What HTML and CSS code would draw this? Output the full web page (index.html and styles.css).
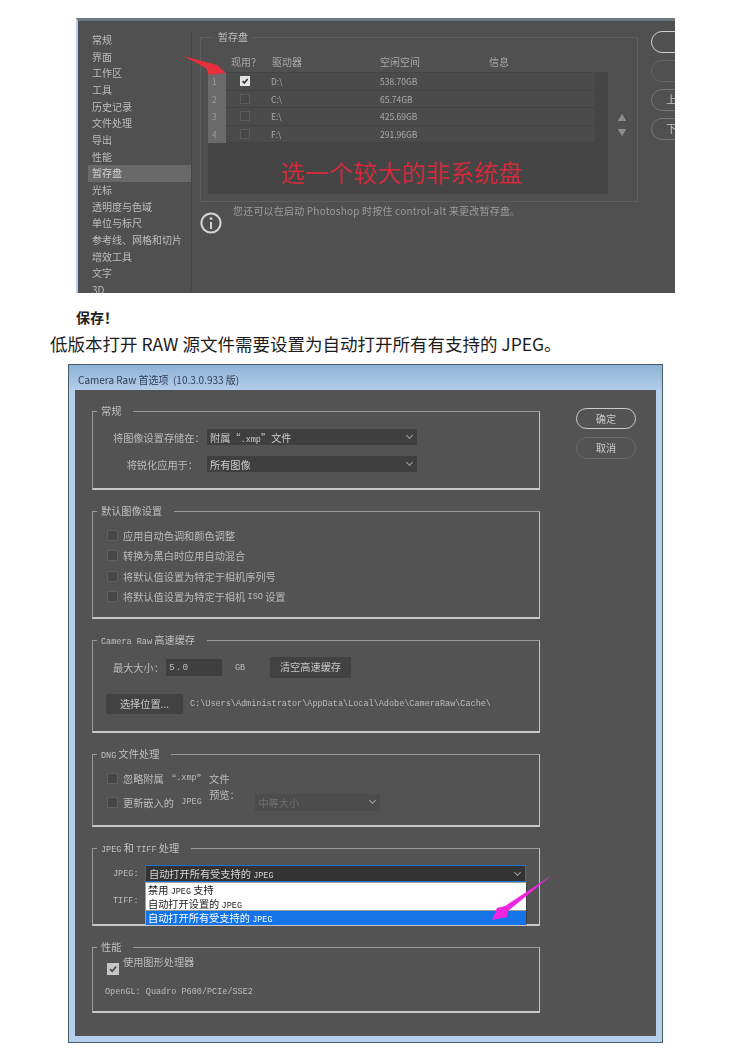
FILE: index.html
```html
<!DOCTYPE html>
<html lang="zh">
<head>
    <meta charset="UTF-8">
    <meta name="viewport" content="width=device-width, initial-scale=1.0">
    <title>暂存盘与 Camera Raw 首选项</title>
    <link rel="stylesheet" href="styles.css">
</head>
<body>

<!-- Photoshop 首选项截图 -->
<div class="ps-shot">
    <ul class="ps-menu">
        <li>常规</li>
        <li>界面</li>
        <li>工作区</li>
        <li>工具</li>
        <li>历史记录</li>
        <li>文件处理</li>
        <li>导出</li>
        <li>性能</li>
        <li class="active">暂存盘</li>
        <li>光标</li>
        <li>透明度与色域</li>
        <li>单位与标尺</li>
        <li>参考线、网格和切片</li>
        <li>增效工具</li>
        <li>文字</li>
        <li>3D</li>
    </ul>
    <div class="ps-main">
        <div class="scratch-group">
            <span class="scratch-legend">暂存盘</span>
            <div class="disk-head">
                <span class="col-use">现用？</span>
                <span class="col-drive">驱动器</span>
                <span class="col-free">空闲空间</span>
                <span>信息</span>
            </div>
            <div class="scratch-body">
                <div class="disk-table">
                    <div class="disk-row">
                        <span class="disk-num">1</span>
                        <div class="disk-cells">
                            <span class="ps-check on"><svg viewBox="0 0 10 10"><path d="M2 5.2 4.2 7.6 8.2 2.6" /></svg></span>
                            <span class="disk-drive">D:\</span>
                            <span>538.70GB</span>
                        </div>
                    </div>
                    <div class="disk-row">
                        <span class="disk-num">2</span>
                        <div class="disk-cells">
                            <span class="ps-check"></span>
                            <span class="disk-drive">C:\</span>
                            <span>65.74GB</span>
                        </div>
                    </div>
                    <div class="disk-row">
                        <span class="disk-num">3</span>
                        <div class="disk-cells">
                            <span class="ps-check"></span>
                            <span class="disk-drive">E:\</span>
                            <span>425.69GB</span>
                        </div>
                    </div>
                    <div class="disk-row">
                        <span class="disk-num">4</span>
                        <div class="disk-cells">
                            <span class="ps-check"></span>
                            <span class="disk-drive">F:\</span>
                            <span>291.96GB</span>
                        </div>
                    </div>
                    <div class="red-note">选一个较大的非系统盘</div>
                </div>
                <div class="move-arrows">
                    <span>▲</span>
                    <span>▼</span>
                </div>
            </div>
        </div>
        <div class="hint">
            <svg class="info-icon" viewBox="0 0 22 22">
                <circle cx="11" cy="11" r="9.6" />
                <circle class="info-dot" cx="11" cy="6.6" r="1.4" />
                <path d="M11 10v7" />
            </svg>
            <span class="hint-text">您还可以在启动 Photoshop 时按住 control-alt 来更改暂存盘。</span>
        </div>
    </div>
    <div class="ps-buttons">
        <div class="ps-btn bright"></div>
        <div class="ps-btn dim"></div>
        <div class="ps-btn">上</div>
        <div class="ps-btn">下</div>
    </div>
    <svg class="red-arrow" viewBox="180 54 50 24">
        <polygon points="183,56 217,65 226,73 209,75 206,68" />
    </svg>
</div>

<p class="save-line">保存！</p>
<p class="lead-line">低版本打开 RAW 源文件需要设置为自动打开所有有支持的 JPEG。</p>

<!-- Camera Raw 首选项截图 -->
<div class="dialog">
    <div class="dialog-title">Camera Raw 首选项 &nbsp;(10.3.0.933 版)</div>
    <div class="dialog-body">
        <div class="groups">

            <div class="group g-general">
                <span class="legend">常规</span>
                <div class="form-row">
                    <span class="form-label">将图像设置存储在：</span>
                    <div class="select wide"><span>附属“<span class="lat">.xmp</span>”文件</span></div>
                </div>
                <div class="form-row">
                    <span class="form-label">将锐化应用于：</span>
                    <div class="select wide"><span>所有图像</span></div>
                </div>
            </div>

            <div class="group g-default">
                <span class="legend">默认图像设置</span>
                <div class="check-row"><span class="check"></span>应用自动色调和颜色调整</div>
                <div class="check-row"><span class="check"></span>转换为黑白时应用自动混合</div>
                <div class="check-row"><span class="check"></span>将默认值设置为特定于相机序列号</div>
                <div class="check-row"><span class="check"></span>将默认值设置为特定于相机 <span class="lat">ISO</span> 设置</div>
            </div>

            <div class="group g-cache">
                <span class="legend"><span class="lat">Camera Raw</span> 高速缓存</span>
                <div class="cache-row">
                    <span class="cache-label">最大大小：</span>
                    <span class="text-input lat">5.0</span>
                    <span class="cache-unit lat">GB</span>
                    <span class="btn purge">清空高速缓存</span>
                </div>
                <div class="cache-row second">
                    <span class="btn locate">选择位置...</span>
                    <span class="cache-path lat">C:\Users\Administrator\AppData\Local\Adobe\CameraRaw\Cache\</span>
                </div>
            </div>

            <div class="group g-dng">
                <span class="legend"><span class="lat">DNG</span> 文件处理</span>
                <div class="check-row tall"><span class="check"></span>忽略附属 “<span class="lat">.xmp</span>” 文件</div>
                <div class="check-row tall">
                    <span class="check"></span>更新嵌入的 <span class="lat">&nbsp;JPEG&nbsp;</span> 预览：
                    <div class="select disabled"><span>中等大小</span></div>
                </div>
            </div>

            <div class="group g-jpeg">
                <span class="legend"><span class="lat">JPEG</span> 和 <span class="lat">TIFF</span> 处理</span>
                <div class="jpeg-row">
                    <span class="jpeg-label lat">JPEG:</span>
                    <div class="select open">
                        <span>自动打开所有受支持的 <span class="lat">JPEG</span></span>
                        <ul class="dropdown">
                            <li>禁用 <span class="lat">JPEG</span> 支持</li>
                            <li>自动打开设置的 <span class="lat">JPEG</span></li>
                            <li class="picked">自动打开所有受支持的 <span class="lat">JPEG</span></li>
                        </ul>
                    </div>
                </div>
                <div class="jpeg-row tiff">
                    <span class="jpeg-label lat">TIFF:</span>
                </div>
            </div>

            <div class="group g-perf">
                <span class="legend">性能</span>
                <div class="check-row gpu">
                    <span class="check on"><svg viewBox="0 0 12 12"><path d="M2.4 6.2 5 8.8 9.8 3.2" /></svg></span>使用图形处理器
                </div>
                <div class="gl-info lat">OpenGL: Quadro P600/PCIe/SSE2</div>
            </div>

        </div>
        <div class="dialog-buttons">
            <div class="pill ok">确定</div>
            <div class="pill">取消</div>
        </div>
    </div>
    <svg class="pink-arrow" viewBox="490 875 65 50">
        <polygon points="552,875 505,906 497,908 492,920 507,917 508,911" />
    </svg>
</div>

</body>
</html>
```
FILE: styles.css
```css
* {
    box-sizing: border-box;
}
body {
    margin: 0;
    background: #ffffff;
    font-family: "Noto Sans CJK SC", "Liberation Sans", sans-serif;
    height: 1061px;
    overflow: hidden;
}
ul {
    list-style: none;
    margin: 0;
    padding: 0;
}

/* ---- Photoshop 首选项 ---- */
.ps-shot {
    position: relative;
    display: flex;
    width: 599px;
    height: 275px;
    margin: 18px 0 0 76px;
    background: #505050;
    border-top: 3px solid #6e7880;
    border-left: 2px solid #b4d0ea;
    overflow: hidden;
    color: #bdbdbd;
    font-size: 10px;
    filter: blur(0.3px);
}
.ps-menu {
    flex: none;
    width: 104px;
    height: 260px;
    margin: 11px 0 0 10px;
    border-right: 1px solid #474747;
}
.ps-menu li {
    height: 16.67px;
    line-height: 16.67px;
    padding-left: 4px;
    white-space: nowrap;
}
.ps-menu .active {
    background: #696969;
    color: #d0d0d0;
}
.ps-main {
    flex: none;
    width: 438px;
    margin: 16px 0 0 8px;
}
.scratch-group {
    position: relative;
    height: 165px;
    border: 1px solid #5e5e5e;
}
.scratch-legend {
    position: absolute;
    top: -9px;
    left: 13px;
    padding: 0 4px;
    background: #505050;
    line-height: 16px;
}
.disk-head {
    display: flex;
    height: 14px;
    margin-top: 17px;
    padding-left: 30px;
    line-height: 14px;
    color: #a8a8a8;
}
.col-use {
    width: 41px;
}
.col-drive {
    width: 108px;
}
.col-free {
    width: 109px;
}
.scratch-body {
    display: flex;
    margin: 3px 0 0 7px;
}
.disk-table {
    position: relative;
    width: 400px;
    height: 122px;
    padding-top: 1px;
    background: #454545;
}
.disk-row {
    display: flex;
    height: 17.5px;
    line-height: 16px;
    font-size: 8.5px;
    color: #aaaaaa;
}
.disk-num {
    width: 18px;
    padding-left: 4px;
    background: #6b6b6b;
    color: #9a9a9a;
}
.disk-cells {
    display: flex;
    align-items: center;
    width: 369px;
    padding-left: 14px;
    background: #4b4b4b;
    border-bottom: 1px solid #424242;
}
.ps-check {
    flex: none;
    width: 10px;
    height: 10px;
    border: 1px solid #5c5c5c;
    background: #474747;
}
.ps-check.on {
    background: #e4e4e4;
    border-color: #e4e4e4;
}
.ps-check svg {
    display: block;
    width: 8px;
    height: 8px;
    fill: none;
    stroke: #333333;
    stroke-width: 2;
}
.disk-drive {
    width: 109px;
    margin-left: 21px;
}
.red-note {
    position: absolute;
    top: 86px;
    left: 73px;
    font-size: 24px;
    line-height: 28px;
    letter-spacing: 0.2px;
    color: #d12b3c;
    white-space: nowrap;
}
.move-arrows {
    display: flex;
    flex-direction: column;
    align-items: center;
    width: 28px;
    margin-left: 0;
    padding-top: 38px;
    font-size: 9px;
    line-height: 15px;
    color: #8c8c8c;
}
.hint {
    display: flex;
    align-items: flex-start;
}
.info-icon {
    flex: none;
    width: 22px;
    height: 22px;
    margin-top: 10px;
    fill: none;
    stroke: #d4d4d4;
    stroke-width: 2;
}
.info-dot {
    fill: #d4d4d4;
    stroke: none;
}
.hint-text {
    margin: 2px 0 0 11px;
    line-height: 14px;
    letter-spacing: 0.2px;
    color: #9c9c9c;
    white-space: nowrap;
}
.ps-buttons {
    flex: none;
    display: flex;
    flex-direction: column;
    gap: 7px;
    width: 60px;
    margin: 10px 0 0 13px;
}
.ps-btn {
    flex: none;
    width: 60px;
    height: 22px;
    padding-left: 14px;
    line-height: 19px;
    font-size: 11px;
    border: 1px solid #767676;
    border-radius: 11px;
    color: #c4c4c4;
}
.ps-btn.bright {
    border-color: #d0d0d0;
}
.ps-btn.dim {
    border-color: #636363;
}
.red-arrow {
    position: absolute;
    top: 33px;
    left: 102px;
    width: 50px;
    height: 24px;
}
.red-arrow polygon {
    fill: #e8303c;
}

/* ---- 中间文字 ---- */
.save-line {
    margin: 14px 0 0 76px;
    font-size: 14px;
    line-height: 20px;
    font-weight: bold;
    color: #222222;
}
.lead-line {
    margin: 5px 0 0 50px;
    font-size: 17.5px;
    line-height: 24px;
    color: #1c1c1c;
    white-space: nowrap;
}

/* ---- Camera Raw 对话框 ---- */
.dialog {
    position: relative;
    width: 595px;
    height: 679px;
    margin: 8px 0 0 68px;
    border: 1px solid #4a5d66;
    background: #b4d0ec;
    color: #bcbcbc;
    font-size: 10.2px;
    filter: blur(0.3px);
}
.dialog-title {
    height: 25px;
    padding-left: 9px;
    line-height: 29px;
    font-size: 10px;
    color: #2f3f55;
    background: linear-gradient(#8fb2d6, #b3cdea);
}
.dialog-body {
    display: flex;
    align-items: flex-start;
    width: 581px;
    height: 646px;
    margin-left: 6px;
    padding: 21px 0 0 17px;
    background: #535353;
}
.lat {
    font-family: "Liberation Mono", monospace;
    font-size: 8.5px;
}
.groups {
    flex: none;
    width: 448px;
}
.group {
    position: relative;
    border: 1px solid #9a9a9a;
    border-bottom: 2px solid #c8c8c8;
    border-right-color: #c4c4c4;
    margin-bottom: 21px;
}
.legend {
    position: absolute;
    top: -8px;
    left: 4px;
    padding: 0 12px 0 4px;
    background: #535353;
    line-height: 14px;
    color: #c0c0c0;
    white-space: nowrap;
}
.g-general {
    height: 79px;
    padding: 17px 0 0 20px;
}
.g-default {
    height: 108px;
    padding: 13px 0 0 14px;
}
.g-cache {
    height: 93px;
    padding: 16px 0 0 20px;
}
.g-dng {
    height: 73px;
    padding: 11px 0 0 14px;
}
.g-jpeg {
    height: 78px;
    margin-bottom: 21px;
    padding: 16px 0 0 20px;
}
.g-perf {
    height: 66px;
    padding: 13px 0 0 14px;
}
.form-row {
    display: flex;
    align-items: center;
    height: 16px;
    margin-bottom: 11px;
}
.form-label {
    width: 85px;
    margin-right: 9px;
    text-align: right;
    white-space: nowrap;
}
.select {
    position: relative;
    display: flex;
    align-items: center;
    justify-content: space-between;
    height: 16px;
    padding: 0 4px 0 3px;
    background: #3f3f3f;
    color: #cccccc;
    white-space: nowrap;
}
.select::after {
    content: "";
    width: 4px;
    height: 4px;
    margin: -3px 1px 0 0;
    border-right: 1px solid #a0a0a0;
    border-bottom: 1px solid #a0a0a0;
    transform: rotate(45deg);
}
.select.wide {
    width: 210px;
}
.select.disabled {
    width: 125px;
    height: 17px;
    margin-left: 3px;
    background: #4c4c4c;
    color: #707070;
}
.select.open {
    width: 381px;
    height: 17px;
    background: #333333;
    border: 1px solid #1f6fcf;
    color: #d4d4d4;
}
.dropdown {
    position: absolute;
    top: 16px;
    left: -1px;
    z-index: 1;
    width: 382px;
    height: 43px;
    background: #ffffff;
    border: 1px solid #a0a0a0;
    border-bottom-width: 2px;
    border-right-color: #3c3c3c;
    color: #1a1a1a;
}
.dropdown li {
    height: 13.5px;
    line-height: 13px;
    padding-left: 2px;
}
.dropdown .picked {
    height: 14px;
    margin-top: 1px;
    background: #1473e6;
    color: #ffffff;
    box-shadow: 0 -1px 0 #9a9a9a;
}
.check-row {
    display: flex;
    align-items: center;
    height: 20.5px;
    white-space: pre;
}
.check-row.tall {
    height: 24px;
}
.check-row.gpu {
    height: 16px;
}
.check {
    flex: none;
    width: 11px;
    height: 11px;
    margin-right: 5px;
    background: #474747;
    border: 1px solid #5f5f5f;
}
.check.on {
    width: 12px;
    height: 12px;
    margin-right: 4px;
    background: #c6c6c6;
    border-color: #c6c6c6;
}
.check svg {
    display: block;
    width: 10px;
    height: 10px;
    fill: none;
    stroke: #4a4a4a;
    stroke-width: 2;
}
.cache-row {
    display: flex;
    align-items: center;
    height: 21px;
}
.cache-row.second {
    height: 20px;
    margin: 16px 0 0 -7px;
}
.cache-label {
    width: 53px;
    white-space: nowrap;
}
.text-input {
    width: 56px;
    height: 17px;
    padding-left: 3px;
    line-height: 17px;
    background: #3f3f3f;
    font-size: 9.5px;
    letter-spacing: 1px;
}
.cache-unit {
    width: 35px;
    margin-left: 13px;
}
.btn {
    display: block;
    text-align: center;
    background: #424242;
    color: #c8c8c8;
    line-height: 20px;
}
.btn.purge {
    width: 81px;
    height: 21px;
}
.btn.locate {
    width: 77px;
    height: 20px;
}
.cache-path {
    margin-left: 7px;
    white-space: nowrap;
}
.jpeg-row {
    display: flex;
    align-items: center;
    height: 17px;
}
.jpeg-row.tiff {
    margin-top: 10px;
}
.jpeg-label {
    width: 32px;
}
.gl-info {
    margin: 9px 0 0 -2px;
    line-height: 12px;
}
.dialog-buttons {
    flex: none;
    width: 60px;
    margin: -3px 0 0 36px;
}
.pill {
    height: 22px;
    margin-bottom: 8px;
    border: 1px solid #696969;
    border-radius: 11px;
    text-align: center;
    line-height: 20px;
    color: #c8c8c8;
}
.pill.ok {
    height: 21px;
    border-color: #cccccc;
}
.pink-arrow {
    position: absolute;
    top: 510px;
    left: 421px;
    z-index: 2;
    width: 65px;
    height: 50px;
}
.pink-arrow polygon {
    fill: #ef25e0;
}
```
